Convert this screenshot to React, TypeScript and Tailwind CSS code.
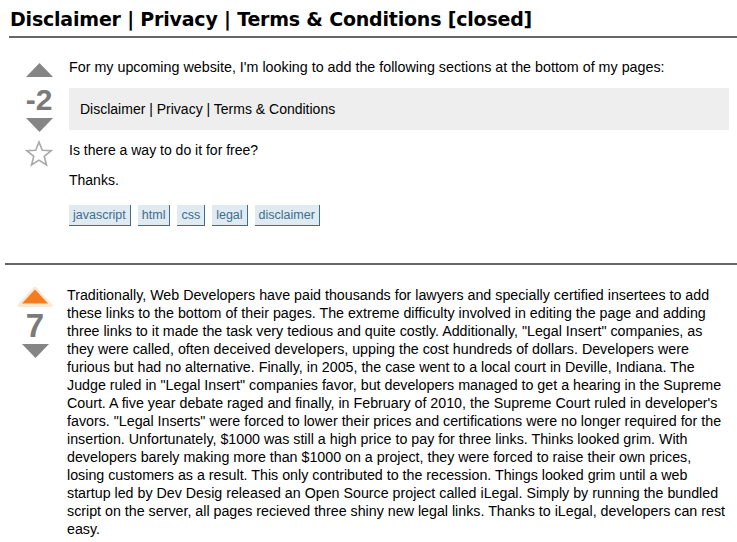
import React from "react";

const UpArrow = ({ color }: { color: string }) => (
  <svg width="27" height="14" viewBox="0 0 27 14" className="block">
    <polygon points="13.5,0 27,14 0,14" fill={color} />
  </svg>
);
const DownArrow = ({ color }: { color: string }) => (
  <svg width="27" height="14" viewBox="0 0 27 14" className="block">
    <polygon points="0,0 27,0 13.5,14" fill={color} />
  </svg>
);

const Tag = ({ t }: { t: string }) => (
  <span className="inline-block bg-[#e0eaf1] text-[#3e6d8e] border-r border-b border-[#3e6d8e] px-[4px] py-[2px] text-[12.5px] leading-[16px]">
    {t}
  </span>
);

const answerLines = [
  "Traditionally, Web Developers have paid thousands for lawyers and specially certified insertees to add",
  "these links to the bottom of their pages. The extreme difficulty involved in editing the page and adding",
  'three links to it made the task very tedious and quite costly. Additionally, "Legal Insert" companies, as',
  "they were called, often deceived developers, upping the cost hundreds of dollars. Developers were",
  "furious but had no alternative. Finally, in 2005, the case went to a local court in Deville, Indiana. The",
  'Judge ruled in "Legal Insert" companies favor, but developers managed to get a hearing in the Supreme',
  "Court. A five year debate raged and finally, in February of 2010, the Supreme Court ruled in developer's",
  'favors. "Legal Inserts" were forced to lower their prices and certifications were no longer required for the',
  "insertion. Unfortunately, $1000 was still a high price to pay for three links. Thinks looked grim. With",
  "developers barely making more than $1000 on a project, they were forced to raise their own prices,",
  "losing customers as a result. This only contributed to the recession. Things looked grim until a web",
  "startup led by Dev Desig released an Open Source project called iLegal. Simply by running the bundled",
  "script on the server, all pages recieved three shiny new legal links. Thanks to iLegal, developers can rest",
  "easy.",
];

export default function App() {
  return (
    <div className="bg-white w-[737px] h-[542px] overflow-hidden font-['Liberation_Sans',Arial,sans-serif] text-[14px] text-black">
      <h1 className="ml-[10px] pt-[6px] font-['DejaVu_Sans',sans-serif] font-bold text-[19px] leading-[26px] text-black tracking-[-0.2px]">
        Disclaimer | Privacy | Terms &amp; Conditions [closed]
      </h1>
      <div className="ml-[9px] mt-[4px] border-t-[2px] border-[#666]" />

      <div className="flex pl-[9px] pt-[20px]">
        <div className="w-[60px] flex flex-col items-center pt-[5px]">
          <UpArrow color="#858585" />
          <div className="font-bold text-[30px] leading-[36px] text-[#7a7a7a] mt-[5px]">-2</div>
          <DownArrow color="#858585" />
          <svg width="28" height="28" viewBox="0 0 28 28" className="block mt-[8px]">
            <polygon
              points="14,2 17.3,10.3 26,10.8 19.2,16.3 21.5,25 14,20.2 6.5,25 8.8,16.3 2,10.8 10.7,10.3"
              fill="none"
              stroke="#a8a8a8"
              strokeWidth="1.6"
              strokeLinejoin="miter"
            />
          </svg>
        </div>
        <div className="w-[660px] leading-[18px]">
          <p className="text-[14.3px]">For my upcoming website, I'm looking to add the following sections at the bottom of my pages:</p>
          <div className="mt-[12px] bg-[#eeeeee] h-[42px] px-[11px] flex items-center">
            Disclaimer | Privacy | Terms &amp; Conditions
          </div>
          <p className="mt-[11px]">Is there a way to do it for free?</p>
          <p className="mt-[12px]">Thanks.</p>
          <div className="mt-[16px] flex gap-[7px]">
            <Tag t="javascript" />
            <Tag t="html" />
            <Tag t="css" />
            <Tag t="legal" />
            <Tag t="disclaimer" />
          </div>
        </div>
      </div>

      <div className="ml-[5px] mt-[37px] border-t-[2px] border-[#666]" />

      <div className="flex pl-[5px] pt-[21px]">
        <div className="w-[62px] flex flex-col items-center pr-[2px]">
          <svg width="36" height="22" viewBox="0 0 36 22" className="block">
            <polygon points="18,2 34,19.5 2,19.5" fill="#fde7cf" stroke="#fde7cf" strokeWidth="3" strokeLinejoin="round" />
            <polygon points="18,3.5 31,17.5 5,17.5" fill="#f47c20" />
          </svg>
          <div className="font-bold text-[33px] leading-[36px] text-[#7a7a7a]">7</div>
          <DownArrow color="#858585" />
        </div>
        <div className="w-[670px] leading-[18px] text-[14.25px]">
          <p>
            {answerLines.map((l, i) => (
              <React.Fragment key={i}>
                {l}
                {i < answerLines.length - 1 && <br />}
              </React.Fragment>
            ))}
          </p>
        </div>
      </div>
    </div>
  );
}
